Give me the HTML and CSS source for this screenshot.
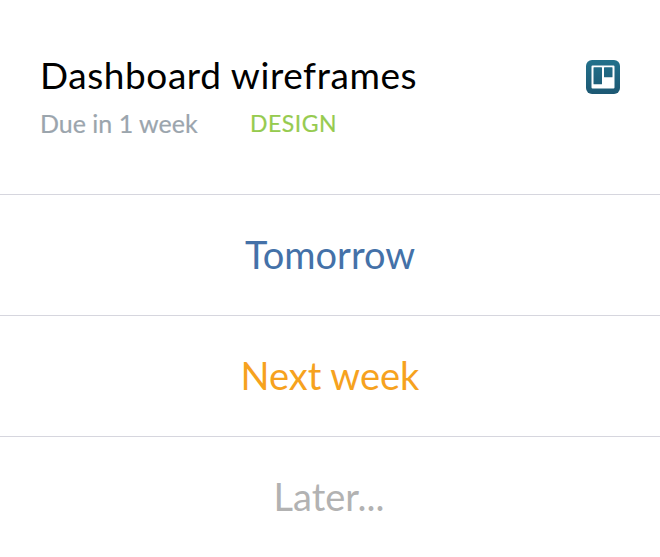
FILE: index.html
```html
<!DOCTYPE html>
<html lang="en">
<head>
<meta charset="utf-8">
<title>Dashboard wireframes</title>
<link rel="stylesheet" href="styles.css">
</head>
<body>
<main class="card">
  <header class="task">
    <div class="task-info">
      <h1 class="title">Dashboard wireframes</h1>
      <div class="meta"><span class="due">Due in 1 week</span><span class="tag">DESIGN</span></div>
    </div>
    <svg class="logo" viewBox="0 0 34 34" role="img" aria-label="Trello">
      <defs><linearGradient id="g" x1="0" y1="0" x2="0" y2="1"><stop offset="0" stop-color="#23718b"/><stop offset="1" stop-color="#1d5873"/></linearGradient></defs>
      <rect width="34" height="34" rx="6" fill="url(#g)"/>
      <path fill="#fff" fill-rule="evenodd" d="M6.5 5.5h21q1 0 1 1v21q0 1-1 1h-21q-1 0-1-1v-21q0-1 1-1zM8 7.3q-.5 0-.5.5v16q0 .5.5.5h7.5q.5 0 .5-.5v-16q0-.5-.5-.5zM18.5 7.3q-.5 0-.5.5v9q0 .5.5.5H26q.5 0 .5-.5v-9q0-.5-.5-.5z"/>
    </svg>
  </header>
  <button class="option tomorrow">Tomorrow</button>
  <button class="option next">Next week</button>
  <button class="option later">Later...</button>
</main>
</body>
</html>
```
FILE: styles.css
```css
* { box-sizing: border-box; }
body { margin: 0; background: #fff; font-family: Lato, sans-serif; }
.card { height: 557px; overflow: hidden; }
.task { display: flex; justify-content: space-between; height: 194px; padding: 51px 40px 0; }
.title { margin: 0; font-size: 37px; font-weight: 400; line-height: 48px; letter-spacing: 0.58px; color: #000; white-space: nowrap; }
.meta { display: flex; line-height: 32px; margin-top: 8px; white-space: nowrap; -webkit-text-stroke: 0.2px currentColor; }
.due { width: 210px; font-size: 25px; color: #9ba5ad; }
.tag { font-size: 23px; letter-spacing: 0.5px; color: #96cb4f; }
.logo { width: 34px; height: 34px; margin-top: 9px; }
.option { display: block; width: 100%; height: 121px; padding: 0 0 2px; border: 0; border-top: 1px solid #d6d6de; background: #fff; font: 400 38px/118px Lato, sans-serif; text-align: center; }
.tomorrow { color: #4471a8; }
.next { color: #f6a21e; }
.later { color: #b2b2b2; padding-right: 2px; }
```
